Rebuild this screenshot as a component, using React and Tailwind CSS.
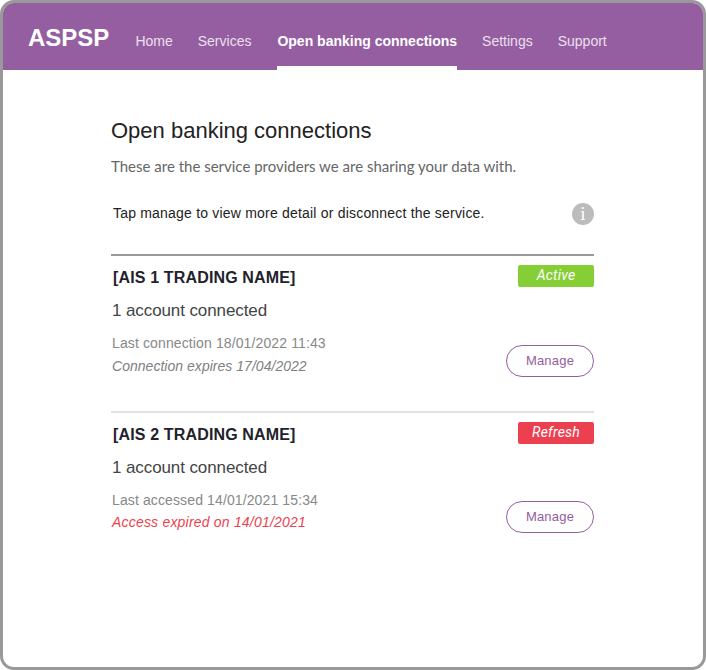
import React from "react";

const navItems = ["Home", "Services", "Open banking connections", "Settings", "Support"];

const connections = [
  {
    name: "[AIS 1 TRADING NAME]",
    status: "Active",
    statusColor: "bg-[#86ce35]",
    line: "Last connection 18/01/2022 11:43",
    note: "Connection expires 17/04/2022",
    noteColor: "text-[#808080] tracking-[0.03px]",
    divider: "border-[#999999]",
  },
  {
    name: "[AIS 2 TRADING NAME]",
    status: "Refresh",
    statusColor: "bg-[#ec4050]",
    line: "Last accessed 14/01/2021 15:34",
    note: "Access expired on 14/01/2021",
    noteColor: "text-[#ee3f4d] tracking-[0.2px] mt-[-1px]",
    divider: "border-[#e2e2e2]",
  },
];

const Connection = ({ item }) => (
  <div className={`border-t-2 ${item.divider} h-[157px] pt-[9px]`}>
    <div className="flex items-start justify-between">
      <h2 className="mt-[1px] pl-[2px] text-[16px] leading-[24px] font-bold text-[#22222c] tracking-[0.15px]">
        {item.name}
      </h2>
      <span
        className={`${item.statusColor} w-[76px] h-[22px] rounded-[2px] text-white text-[14px] leading-[20px] italic text-center tracking-[0.2px] font-['Roboto',sans-serif]`}
      >
        {item.status}
      </span>
    </div>
    <p className="mt-[10px] pl-[1px] text-[17px] leading-[22px] text-[#444444] tracking-[-0.1px]">1 account connected</p>
    <div className="flex items-end justify-between">
      <div className="mt-[10px] pl-[1px] text-[14px] leading-[23px]">
        <p className="text-[#888888] tracking-[0.12px]">{item.line}</p>
        <p className={`italic ${item.noteColor}`}>{item.note}</p>
      </div>
      <button className="w-[88px] h-[32px] rounded-full border border-[#955ea1] text-[#955ea1] text-[13px] leading-[30px] tracking-[0.2px] mb-[1px]">
        Manage
      </button>
    </div>
  </div>
);

export default function App() {
  return (
    <div className="w-[706px] h-[670px] bg-white border-[3px] border-[#999999] rounded-[14px] overflow-hidden font-['Liberation_Sans',Arial,sans-serif]">
      <header className="h-[67px] bg-[#955ea1] flex pl-[25px] text-white">
        <div className="text-[24px] leading-[70px] font-bold mr-[26px]">ASPSP</div>
        <nav className="flex gap-[25px]">
          {navItems.map((label) => {
            const active = label === "Open banking connections";
            return (
              <a
                key={label}
                className={`h-[67px] text-[14px] leading-[77px] ${
                  active ? "font-bold border-b-4 border-white ml-[1px]" : "text-white/80"
                }`}
              >
                {label}
              </a>
            );
          })}
        </nav>
      </header>

      <main className="pl-[108px] pr-[109px] pt-[47px]">
        <h1 className="text-[22px] leading-[28px] text-[#222222]">Open banking connections</h1>
        <p className="mt-[9px] text-[15px] leading-[24px] text-[#666666] font-['Lato',sans-serif]">
          These are the service providers we are sharing your data with.
        </p>
        <div className="mt-[16px] h-[40px] flex items-center justify-between">
          <p className="pl-[2px] mb-[2px] text-[14px] text-[#222222] tracking-[0.2px]">
            Tap manage to view more detail or disconnect the service.
          </p>
          <span className="w-[22px] h-[22px] rounded-full bg-[#bcbcbc] text-white flex items-center justify-center">
            <span className="text-[19px] leading-[22px] font-['Liberation_Serif',serif]">i</span>
          </span>
        </div>
        <div className="mt-[20px]">
          {connections.map((item) => (
            <Connection key={item.name} item={item} />
          ))}
        </div>
      </main>
    </div>
  );
}
